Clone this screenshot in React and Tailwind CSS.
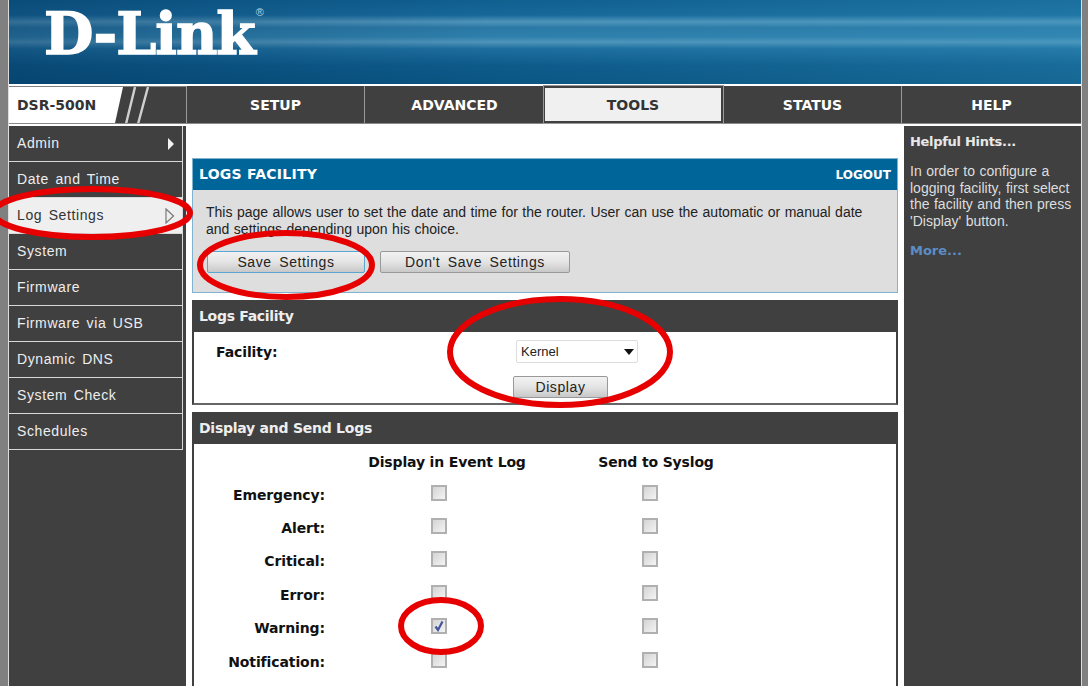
import React from 'react';

const tabs = [
    { label: 'SETUP', w: 'w-[178px]' },
    { label: 'ADVANCED', w: 'w-[180px]' },
    { label: 'TOOLS', w: 'w-[179px]', active: true },
    { label: 'STATUS', w: 'w-[178px]' },
    { label: 'HELP', w: 'flex-1' },
];

const menu = ['Admin', 'Date and Time', 'Log Settings', 'System', 'Firmware', 'Firmware via USB', 'Dynamic DNS', 'System Check', 'Schedules'];

const levels = [
    { name: 'Emergency:' },
    { name: 'Alert:' },
    { name: 'Critical:' },
    { name: 'Error:' },
    { name: 'Warning:', checked: true },
    { name: 'Notification:' },
];

const sans = "font-['Liberation_Sans',Arial,sans-serif]";
const bold = "font-['DejaVu_Sans',Verdana,sans-serif] font-bold";

const Check = ({ checked }) => (
    <div className="w-4 h-4 mb-[2px] border-2 border-[#b0b0b0] bg-gradient-to-br from-[#d4d4d4] to-[#f4f4f4] flex items-center justify-center">
        {checked && (
            <svg width="12" height="12" viewBox="0 0 12 12">
                <path d="M2.5 6.5 L5 10 L9.5 1.5" fill="none" stroke="#44549a" strokeWidth="2.2" />
            </svg>
        )}
    </div>
);

const Btn = ({ className, children }) => (
    <button className={`h-[22px] rounded-[2px] bg-gradient-to-b from-[#f2f2f2] via-[#e4e4e4] to-[#c8c8c8] text-[14px] tracking-[0.6px] [word-spacing:3px] text-[#222] flex items-center justify-center ${sans} ${className}`}>
        {children}
    </button>
);

const App = () => {
    return (
        <div className={`relative w-[1088px] h-[686px] overflow-hidden bg-[#808080] px-[8px] ${sans}`}>
            <div className="w-[1074px] h-full bg-[#404040] flex flex-col border-x border-[#dcdcdc]">
                {/* banner */}
                <div className="relative h-[84px] shrink-0 pl-[35px] bg-[linear-gradient(180deg,#0f5f8f_0%,#17689a_18%,#4f94ba_26%,#2a78a5_33%,#2f80ac_44%,#4f94ba_50%,#1d6e9e_58%,#0d5a8a_78%,#0a5582_100%)]">
                    <div className="absolute inset-0 bg-[linear-gradient(90deg,rgba(0,40,80,0.35),rgba(0,0,0,0)_45%,rgba(60,160,200,0.25))]"></div>
                    <div className="relative flex items-start text-white">
                        <span className="font-['DejaVu_Serif',serif] font-bold text-[57px] tracking-[-1px] leading-[67px] [-webkit-text-stroke:1.4px_white]">D-Link</span>
                        <span className="text-[11px] ml-[1px] mt-[4px] text-[#b9d2e0]">®</span>
                    </div>
                </div>

                {/* nav */}
                <div className="h-[2px] shrink-0 bg-white"></div>
                <div className="h-[38px] shrink-0 flex bg-[#404040] border-b border-[#8a8a8a]">
                    <div className="w-[177px] flex border-t border-[#808080] relative overflow-hidden">
                        <div className={`w-[114px] bg-white text-[#333] text-[14px] leading-[37px] pl-[8px] ${bold} [clip-path:polygon(0_0,100%_0,93%_100%,0_100%)]`}>
                            DSR-500N
                        </div>
                        <svg className="absolute left-[115px] top-0" width="34" height="37" viewBox="0 0 34 37">
                            <path d="M11 0 L2 37 M24 0 L14 37" stroke="#cfcfcf" strokeWidth="2.4" />
                        </svg>
                    </div>
                    {tabs.map((t) => (
                        <div
                            key={t.label}
                            className={`${t.w} border-l pt-[2px] border-[#9a9a9a] text-[14px] flex items-center justify-center ${bold} ${t.active ? 'text-[#333] bg-[#f0f0f0] border-2 border-[#404040] outline outline-1 outline-[#999]' : 'text-white'}`}
                        >
                            {t.label}
                        </div>
                    ))}
                </div>

                {/* body */}
                <div className="flex-1 flex min-h-0 border-t-2 border-white">
                    <div className="w-[177px] shrink-0 pr-[3px]">
                        {menu.map((m) => (
                            <div
                                key={m}
                                className={`h-[36px] flex items-center justify-between pl-[8px] pr-[7px] border-r border-b border-[#d8d8d8] text-[14px] tracking-[0.6px] [word-spacing:2px] ${m === 'Log Settings' ? 'bg-[#efefef] text-[#333]' : 'text-[#eee]'}`}
                            >
                                {m}
                                {m === 'Admin' && (
                                    <svg width="8" height="14" viewBox="0 0 8 14"><path d="M1 1 L7 7 L1 13 Z" fill="#f2f2f2" /></svg>
                                )}
                                {m === 'Log Settings' && (
                                    <svg width="10" height="16" viewBox="0 0 10 16"><path d="M1 1 L8.5 8 L1 15 Z" fill="none" stroke="#777" strokeWidth="1.2" /></svg>
                                )}
                            </div>
                        ))}
                    </div>

                    <div className="w-[718px] shrink-0 bg-white pt-[32px] px-[6px] flex flex-col gap-[7px]">
                        <div className="h-[135px] shrink-0 border border-[#7fb3cf] bg-[#dedede]">
                            <div className={`h-[31px] bg-[#006699] text-white flex items-center justify-between pl-[6px] pr-[6px] ${bold}`}>
                                <span className="text-[14px] tracking-[0.25px]">LOGS FACILITY</span>
                                <span className="text-[12px]">LOGOUT</span>
                            </div>
                            <p className="pl-[13px] pt-[14px] text-[14px] leading-[17px] [word-spacing:0.6px] text-[#222] whitespace-nowrap">
                                This page allows user to set the date and time for the router. User can use the automatic or manual date<br />
                                and settings depending upon his choice.
                            </p>
                            <div className="flex gap-[15px] pl-[14px] pt-[13px]">
                                <Btn className="w-[158px] border border-[#5aa6d0]">Save Settings</Btn>
                                <Btn className="w-[190px] border border-[#999]">Don't Save Settings</Btn>
                            </div>
                        </div>

                        <div className="h-[105px] shrink-0 border-2 border-t-0 border-[#404040] border-b-[#666]">
                            <div className={`h-[32px] -mx-[2px] bg-[#404040] text-[#eee] text-[14px] tracking-[-0.3px] flex items-center pl-[7px] ${bold}`}>Logs Facility</div>
                            <div className="flex">
                                <div className={`w-[322px] pl-[22px] pt-[10px] text-[14px] tracking-[-0.1px] text-[#111] ${bold}`}>Facility:</div>
                                <div className="flex flex-col items-start pt-[8px]">
                                    <div className="w-[122px] h-[23px] border border-[#ddd] rounded-[2px] flex items-center justify-between pl-[4px] pr-[3px] text-[13px] text-[#222]">
                                        Kernel
                                        <svg width="10" height="6" viewBox="0 0 10 6"><path d="M0 0 H10 L5 6 Z" fill="#111" /></svg>
                                    </div>
                                    <Btn className="w-[95px] -ml-[3px] mt-[13px] border border-[#999]">Display</Btn>
                                </div>
                            </div>
                        </div>

                        <div className="flex-1 border-x-2 border-[#404040]">
                            <div className={`h-[32px] -mx-[2px] bg-[#404040] text-[#eee] text-[14px] tracking-[-0.25px] flex items-center pl-[7px] ${bold}`}>Display and Send Logs</div>
                            <div className={`flex h-[33px] pt-[3px] items-center text-[14px] tracking-[-0.15px] text-[#111] ${bold}`}>
                                <div className="w-[174px]"></div>
                                <div className="w-[158px] text-center whitespace-nowrap">Display in Event Log</div>
                                <div className="w-[65px]"></div>
                                <div className="w-[130px] text-center whitespace-nowrap">Send to Syslog</div>
                            </div>
                            {levels.map((l) => (
                                <div key={l.name} className="flex h-[33.4px] items-center">
                                    <div className={`w-[131px] text-right text-[14px] tracking-[-0.1px] text-[#111] mt-[3px] ${bold}`}>{l.name}</div>
                                    <div className="w-[106px]"></div>
                                    <Check checked={l.checked} />
                                    <div className="w-[195px]"></div>
                                    <Check />
                                </div>
                            ))}
                        </div>
                    </div>

                    <div className="flex-1 pl-[6px] pr-[4px] pt-[7px] text-[14px] text-[#e8e8e8]">
                        <div className={`text-[13px] tracking-[-0.3px] leading-[17px] ${bold}`}>Helpful Hints...</div>
                        <p className="mt-[13px] leading-[16.5px] [word-spacing:0.6px] text-[#ddd] whitespace-nowrap">
                            In order to configure a<br />
                            logging facility, first select<br />
                            the facility and then press<br />
                            'Display' button.
                        </p>
                        <div className={`mt-[12px] text-[13px] text-[#5b8dc4] ${bold}`}>More...</div>
                    </div>
                </div>
            </div>

            {/* red annotation rings drawn over the page */}
            <svg className="absolute inset-0 pointer-events-none" width="1088" height="686" viewBox="0 0 1088 686">
                <g fill="none" stroke="#e60000" strokeWidth="6">
                    <ellipse cx="92" cy="213" rx="98" ry="24" />
                    <ellipse cx="286" cy="265" rx="86" ry="32" />
                    <ellipse cx="560" cy="352" rx="110" ry="53" />
                    <ellipse cx="441" cy="626" rx="40" ry="26" />
                </g>
            </svg>
        </div>
    );
};

export default App;
